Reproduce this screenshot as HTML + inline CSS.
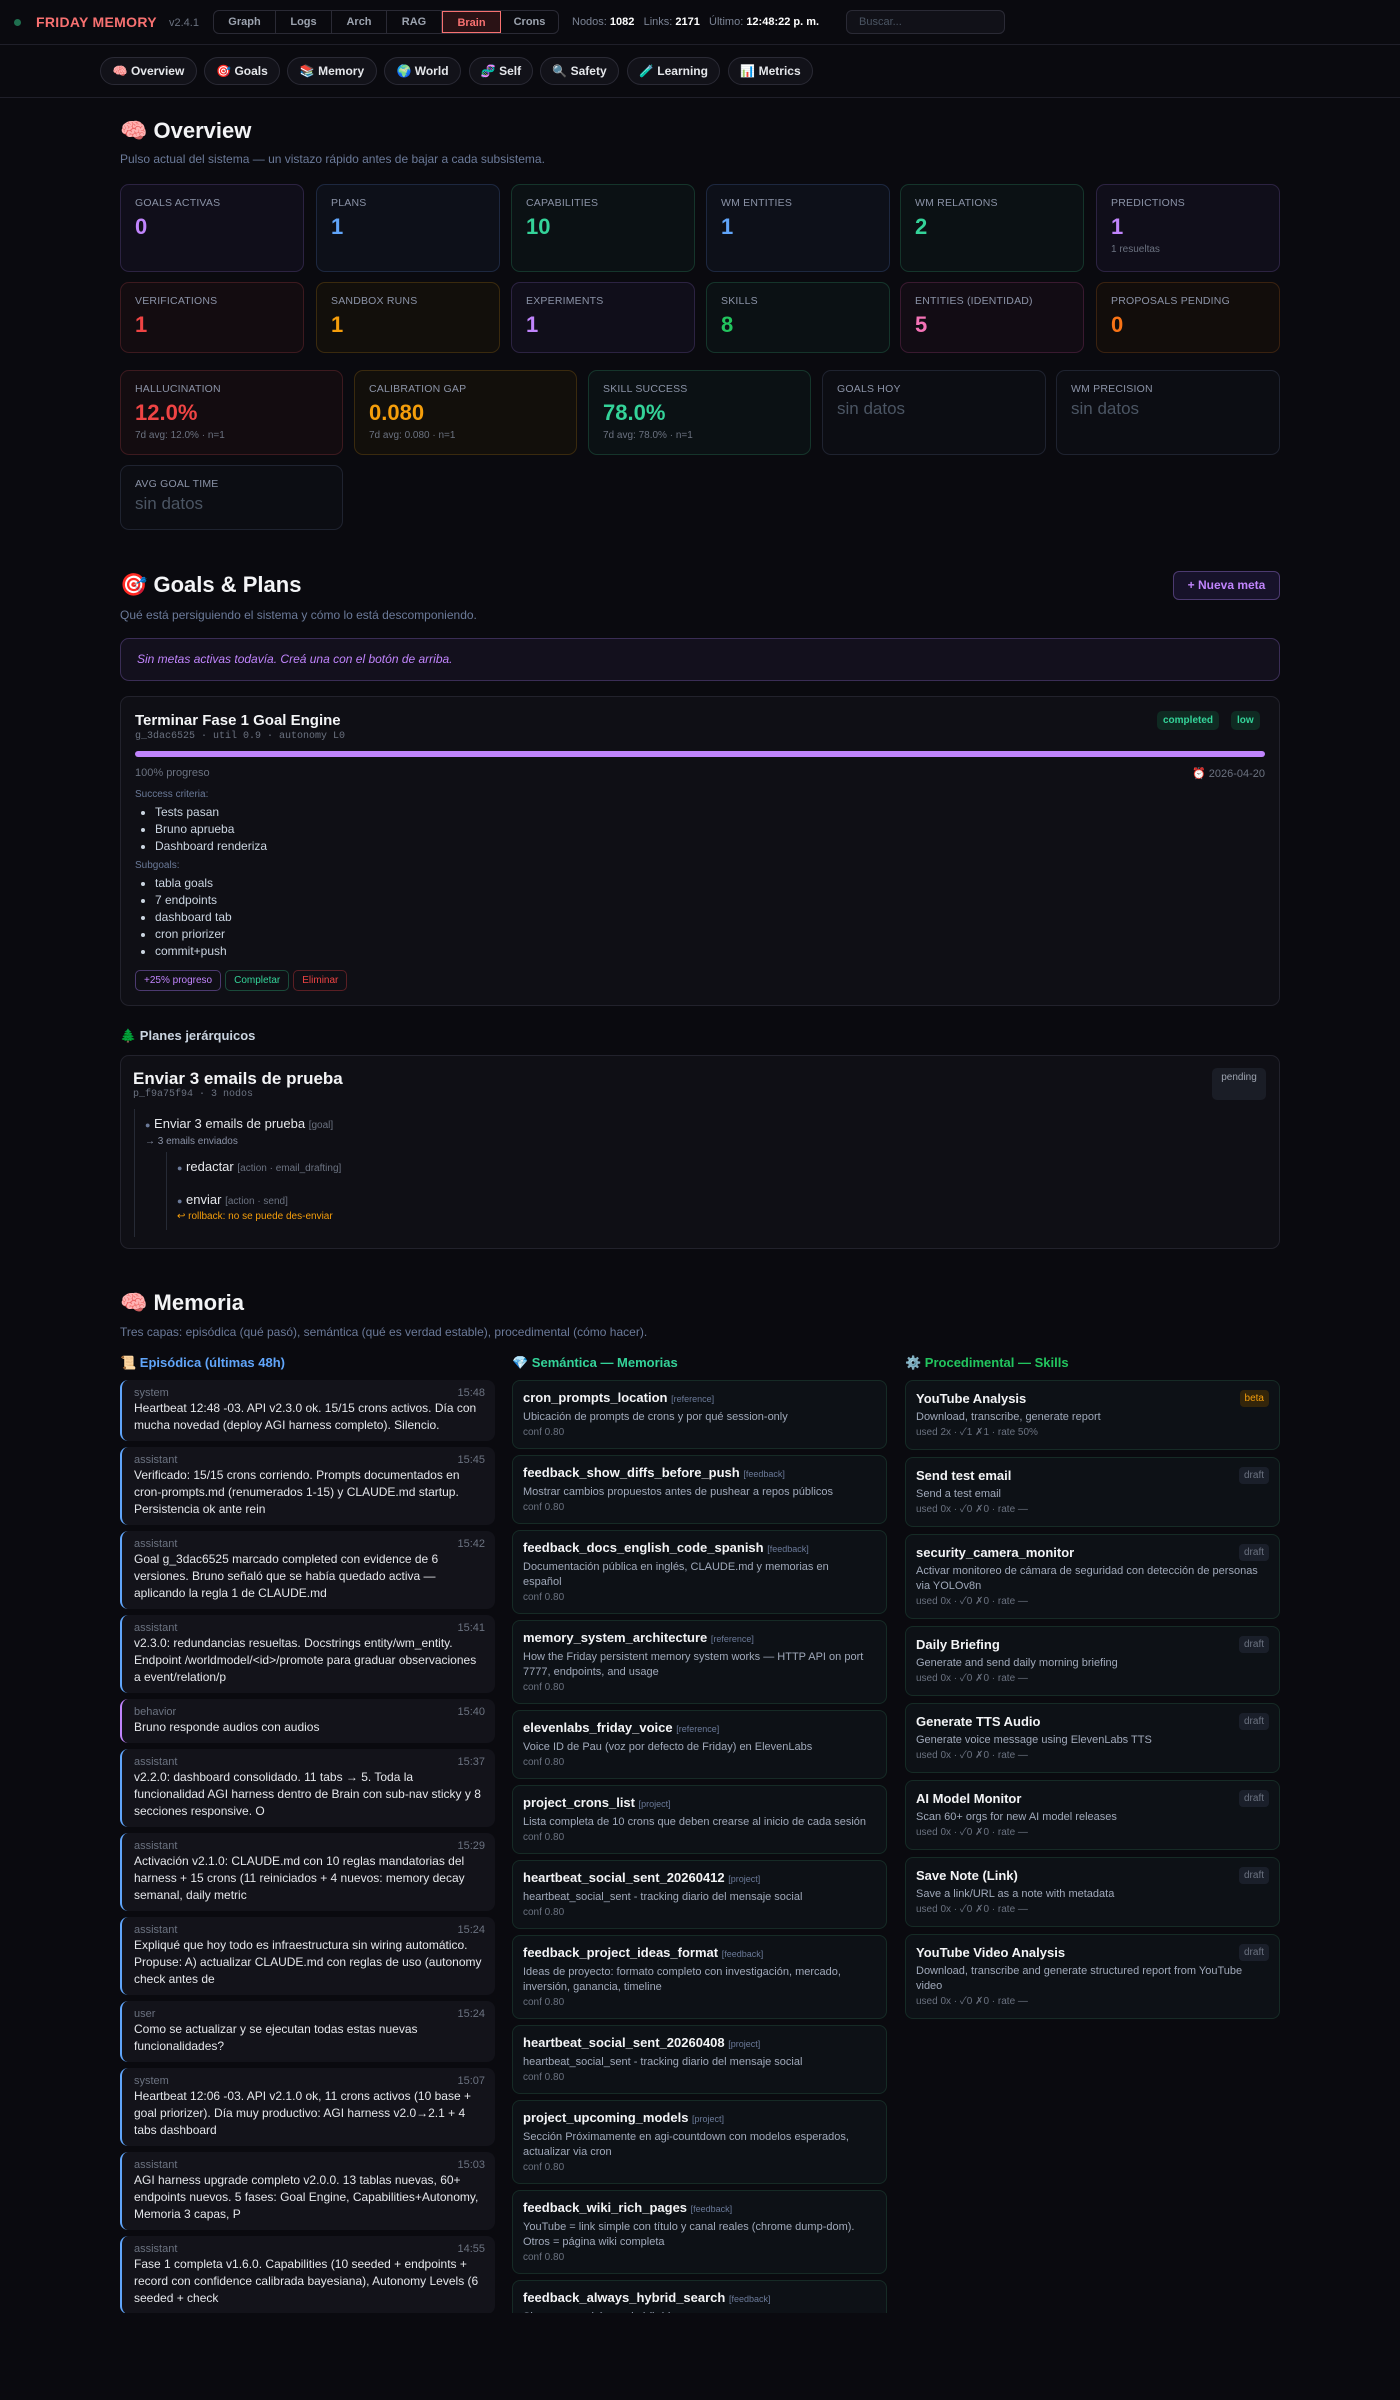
<!DOCTYPE html>
<html><head><meta charset="utf-8"><style>
*{box-sizing:border-box;margin:0;padding:0}
body{width:1400px;height:2400px;background:#0a0a0f;font-family:"Liberation Sans","Noto Sans CJK SC",sans-serif;color:#e5e7eb;position:relative;overflow:hidden}
.abs{position:absolute}
.top{left:0;top:0;width:1400px;height:45px;border-bottom:1px solid #1f1f29}
.brand{left:36px;top:14px;font-size:14px;font-weight:bold;color:#f87171;letter-spacing:.3px}
.dot{left:14px;top:19px;width:7px;height:7px;border-radius:50%;background:#1f6f4f}
.ver{left:169px;top:17px;font-size:11px;color:#6b7280}
.tabs{left:213px;top:10px;height:24px;width:346px;display:flex;border:1px solid #2a2a35;border-radius:6px;overflow:hidden}
.tabs div{font-size:11px;font-weight:bold;color:#9ca3af;line-height:22px;border-right:1px solid #2a2a35;text-align:center;flex:none}
.tabs div:last-child{border-right:none}
.tabs .on{color:#f87171;background:#2a1215;border:1px solid #f87171}
.stats{left:572px;top:16px;font-size:11px;color:#7b8394}
.stats b{color:#fff}
.search{left:846px;top:10px;width:159px;height:24px;border:1px solid #2a2a35;border-radius:6px;background:#111118;font-size:11px;color:#4b5563;padding:5px 12px}
.sub{left:0;top:45px;width:1400px;height:53px;border-bottom:1px solid #1f1f29}
.pill{position:absolute;top:12px;height:28px;border:1px solid #2a2a35;border-radius:14px;background:#121219;font-size:12px;font-weight:bold;color:#e5e7eb;line-height:26px;text-align:center}
h2{position:absolute;left:120px;font-size:22px;font-weight:bold;color:#f3f4f6}
.sd{position:absolute;left:120px;font-size:12px;color:#6b7a99}
.card{position:absolute;border:1px solid;border-radius:9px;padding:12px 14px}
.lab{font-size:10.5px;color:#8b93a7;letter-spacing:.2px;text-transform:uppercase}
.val{font-size:22px;font-weight:bold;margin-top:5px}
.sm{font-size:10px;color:#6b7280;margin-top:4px}
.nd{font-size:17px;color:#4b5563;margin-top:4px}
.pu{border-color:#2c2342;background:#100e1a}.pu .val{color:#c084fc}
.bl{border-color:#1d2840;background:#0d1019}.bl .val{color:#60a5fa}
.gr{border-color:#15352b;background:#0b1114}.gr .val{color:#34d399}
.rd{border-color:#3d1a1f;background:#130c10}.rd .val{color:#ef4444}
.am{border-color:#3a2a0e;background:#120f0b}.am .val{color:#f59e0b}
.gn{border-color:#15352b;background:#0b1114}.gn .val{color:#22c55e}
.pk{border-color:#3a1a30;background:#120c14}.pk .val{color:#f472b6}
.or{border-color:#3a2210;background:#120d0b}.or .val{color:#f97316}
.ne{border-color:#1f2330;background:#0c0d13}
.box{position:absolute;border:1px solid #22222c;border-radius:9px;background:#0f0f15}
.bdg{position:absolute;font-size:10px;font-weight:bold;padding:4px 6px;border-radius:5px}
ul{list-style:disc;padding-left:20px}
li{font-size:12px;line-height:17px;color:#cbd5e1}
.btn{display:inline-block;font-size:10px;padding:4px 8px;border-radius:5px;border:1px solid;margin-right:4px}
.col{position:absolute;top:1380px;width:375px;height:933px;overflow:hidden}
.ep{background:#13131a;border-left:2px solid #60a5fa;border-radius:8px;padding:6px 10px 7px 12px;margin-bottom:6px}
.ep .r{font-size:11px;color:#6b7280;display:flex;justify-content:space-between;line-height:14px}
.ep .t{font-size:12px;line-height:17px;color:#e5e7eb}
.se{background:#0d1116;border:1px solid #162b26;border-radius:8px;padding:8px 10px 7px 10px;margin-bottom:6px;position:relative}
.se .h{font-size:13px;font-weight:bold;color:#f3f4f6;line-height:18px;margin-bottom:2px}
.se .h i{font-style:normal;font-size:9px;color:#6b7a99;font-weight:normal}
.se .d{font-size:11px;line-height:15px;color:#a0a9ba;padding-right:8px}
.se .c{font-size:10px;line-height:16px;color:#6b7280}
.se .bd{position:absolute;right:10px;top:9px;font-size:10px;padding:3px 5px;border-radius:4px;background:#1a1f2a;color:#6b7280}
.sk .se{margin-bottom:7px;padding:9px 10px 8px 10px}
</style></head><body>
<div class="abs top"></div>
<div class="abs dot"></div>
<div class="abs brand">FRIDAY MEMORY</div>
<div class="abs ver">v2.4.1</div>
<div class="abs tabs"><div style="width:62px">Graph</div><div style="width:56px">Logs</div><div style="width:55px">Arch</div><div style="width:55px">RAG</div><div class="on" style="width:59px">Brain</div><div style="width:57px">Crons</div></div>
<div class="abs stats">Nodos: <b>1082</b> &nbsp; Links: <b>2171</b> &nbsp; Último: <b>12:48:22 p. m.</b></div>
<div class="abs search">Buscar...</div>
<div class="abs sub"></div>
<div class="pill" style="left:100px;top:57px;width:97px">🧠 Overview</div>
<div class="pill" style="left:204px;top:57px;width:76px">🎯 Goals</div>
<div class="pill" style="left:287px;top:57px;width:90px">📚 Memory</div>
<div class="pill" style="left:384px;top:57px;width:77px">🌍 World</div>
<div class="pill" style="left:469px;top:57px;width:64px">🧬 Self</div>
<div class="pill" style="left:540px;top:57px;width:79px">🔍 Safety</div>
<div class="pill" style="left:627px;top:57px;width:93px">🧪 Learning</div>
<div class="pill" style="left:728px;top:57px;width:85px">📊 Metrics</div>

<h2 style="top:118px">🧠 Overview</h2>
<div class="sd" style="top:152px">Pulso actual del sistema — un vistazo rápido antes de bajar a cada subsistema.</div>

<div class="card pu" style="left:120px;top:184px;width:184px;height:88px"><div class="lab">Goals activas</div><div class="val">0</div></div>
<div class="card bl" style="left:316px;top:184px;width:184px;height:88px"><div class="lab">Plans</div><div class="val">1</div></div>
<div class="card gr" style="left:511px;top:184px;width:184px;height:88px"><div class="lab">Capabilities</div><div class="val">10</div></div>
<div class="card bl" style="left:706px;top:184px;width:184px;height:88px"><div class="lab">WM Entities</div><div class="val">1</div></div>
<div class="card gr" style="left:900px;top:184px;width:184px;height:88px"><div class="lab">WM Relations</div><div class="val">2</div></div>
<div class="card pu" style="left:1096px;top:184px;width:184px;height:88px"><div class="lab">Predictions</div><div class="val">1</div><div class="sm">1 resueltas</div></div>

<div class="card rd" style="left:120px;top:282px;width:184px;height:71px"><div class="lab">Verifications</div><div class="val">1</div></div>
<div class="card am" style="left:316px;top:282px;width:184px;height:71px"><div class="lab">Sandbox runs</div><div class="val">1</div></div>
<div class="card pu" style="left:511px;top:282px;width:184px;height:71px"><div class="lab">Experiments</div><div class="val">1</div></div>
<div class="card gn" style="left:706px;top:282px;width:184px;height:71px"><div class="lab">Skills</div><div class="val">8</div></div>
<div class="card pk" style="left:900px;top:282px;width:184px;height:71px"><div class="lab">Entities (identidad)</div><div class="val">5</div></div>
<div class="card or" style="left:1096px;top:282px;width:184px;height:71px"><div class="lab">Proposals pending</div><div class="val">0</div></div>

<div class="card rd" style="left:120px;top:370px;width:223px;height:85px"><div class="lab">Hallucination</div><div class="val" style="color:#ef4444">12.0%</div><div class="sm">7d avg: 12.0% · n=1</div></div>
<div class="card am" style="left:354px;top:370px;width:223px;height:85px"><div class="lab">Calibration gap</div><div class="val">0.080</div><div class="sm">7d avg: 0.080 · n=1</div></div>
<div class="card gr" style="left:588px;top:370px;width:223px;height:85px"><div class="lab">Skill success</div><div class="val">78.0%</div><div class="sm">7d avg: 78.0% · n=1</div></div>
<div class="card ne" style="left:822px;top:370px;width:224px;height:85px"><div class="lab">Goals hoy</div><div class="nd">sin datos</div></div>
<div class="card ne" style="left:1056px;top:370px;width:224px;height:85px"><div class="lab">WM precision</div><div class="nd">sin datos</div></div>
<div class="card ne" style="left:120px;top:465px;width:223px;height:65px"><div class="lab">Avg goal time</div><div class="nd">sin datos</div></div>

<h2 style="top:572px">🎯 Goals &amp; Plans</h2>
<div class="abs" style="left:1173px;top:571px;width:107px;height:29px;border:1px solid #4c3a70;border-radius:6px;background:#17122a;color:#c084fc;font-size:12px;font-weight:bold;text-align:center;line-height:27px">+ Nueva meta</div>
<div class="sd" style="top:608px">Qué está persiguiendo el sistema y cómo lo está descomponiendo.</div>
<div class="abs" style="left:120px;top:638px;width:1160px;height:43px;border:1px solid #3a2d55;border-radius:9px;background:#13101d;color:#c084fc;font-style:italic;font-size:12px;padding:13px 16px">Sin metas activas todavía. Creá una con el botón de arriba.</div>

<div class="box" style="left:120px;top:696px;width:1160px;height:310px"></div>
<div class="abs" style="left:135px;top:712px;font-size:15px;font-weight:bold;color:#f3f4f6">Terminar Fase 1 Goal Engine</div>
<div class="abs" style="left:135px;top:731px;font-size:10px;color:#6b7280;font-family:'Liberation Mono',monospace">g_3dac6525 · util 0.9 · autonomy L0</div>
<div class="bdg" style="left:1157px;top:711px;background:#0f2a22;color:#34d399">completed</div>
<div class="bdg" style="left:1231px;top:711px;background:#0f2a22;color:#34d399">low</div>
<div class="abs" style="left:135px;top:751px;width:1130px;height:6px;border-radius:3px;background:#c084fc"></div>
<div class="abs" style="left:135px;top:767px;font-size:11px;color:#6b7280">100% progreso</div>
<div class="abs" style="left:1192px;top:767px;font-size:11px;color:#6b7280">⏰ 2026-04-20</div>
<div class="abs" style="left:135px;top:789px;font-size:10px;color:#6b7a99">Success criteria:</div>
<ul class="abs" style="left:135px;top:804px"><li>Tests pasan</li><li>Bruno aprueba</li><li>Dashboard renderiza</li></ul>
<div class="abs" style="left:135px;top:860px;font-size:10px;color:#6b7a99">Subgoals:</div>
<ul class="abs" style="left:135px;top:875px"><li>tabla goals</li><li>7 endpoints</li><li>dashboard tab</li><li>cron priorizer</li><li>commit+push</li></ul>
<div class="abs" style="left:135px;top:970px"><span class="btn" style="border-color:#4c3a70;color:#c084fc">+25% progreso</span><span class="btn" style="border-color:#1a4a3a;color:#34d399">Completar</span><span class="btn" style="border-color:#5a1f24;color:#ef4444">Eliminar</span></div>

<div class="abs" style="left:120px;top:1028px;font-size:13px;font-weight:bold;color:#cbd5e1">🌲 Planes jerárquicos</div>
<div class="box" style="left:120px;top:1055px;width:1160px;height:194px"></div>
<div class="abs" style="left:133px;top:1069px;font-size:17px;font-weight:bold;color:#f3f4f6">Enviar 3 emails de prueba</div>
<div class="abs" style="left:133px;top:1089px;font-size:10px;color:#6b7280;font-family:'Liberation Mono',monospace">p_f9a75f94 · 3 nodos</div>
<div class="bdg" style="left:1212px;top:1068px;width:54px;height:32px;background:#1a1d26;color:#9ca3af;font-weight:normal;text-align:center">pending</div>
<div class="abs" style="left:134px;top:1109px;width:1px;height:128px;background:#262a35"></div>
<div class="abs" style="left:145px;top:1116px;font-size:13px;color:#e5e7eb"><span style="color:#6b7a99;font-size:9px">●</span> Enviar 3 emails de prueba <span style="font-size:10px;color:#6b7280">[goal]</span></div>
<div class="abs" style="left:145px;top:1136px;font-size:10px;color:#8b93a7">→ 3 emails enviados</div>
<div class="abs" style="left:166px;top:1152px;width:1px;height:78px;background:#262a35"></div>
<div class="abs" style="left:177px;top:1159px;font-size:13px;color:#e5e7eb"><span style="color:#6b7a99;font-size:9px">●</span> redactar <span style="font-size:10px;color:#6b7280">[action · email_drafting]</span></div>
<div class="abs" style="left:177px;top:1192px;font-size:13px;color:#e5e7eb"><span style="color:#6b7a99;font-size:9px">●</span> enviar <span style="font-size:10px;color:#6b7280">[action · send]</span></div>
<div class="abs" style="left:177px;top:1211px;font-size:10px;color:#f59e0b">↩ rollback: no se puede des-enviar</div>

<h2 style="top:1290px">🧠 Memoria</h2>
<div class="sd" style="top:1325px">Tres capas: episódica (qué pasó), semántica (qué es verdad estable), procedimental (cómo hacer).</div>
<div class="abs" style="left:120px;top:1355px;font-size:13px;font-weight:bold;color:#60a5fa">📜 Episódica (últimas 48h)</div>
<div class="abs" style="left:512px;top:1355px;font-size:13px;font-weight:bold;color:#34d399">💎 Semántica — Memorias</div>
<div class="abs" style="left:905px;top:1355px;font-size:13px;font-weight:bold;color:#22c55e">⚙️ Procedimental — Skills</div>

<div class="col" style="left:120px">
<div class="ep"><div class="r"><span>system</span><span>15:48</span></div><div class="t">Heartbeat 12:48 -03. API v2.3.0 ok. 15/15 crons activos. Día con mucha novedad (deploy AGI harness completo). Silencio.</div></div>
<div class="ep"><div class="r"><span>assistant</span><span>15:45</span></div><div class="t">Verificado: 15/15 crons corriendo. Prompts documentados en cron-prompts.md (renumerados 1-15) y CLAUDE.md startup. Persistencia ok ante rein</div></div>
<div class="ep"><div class="r"><span>assistant</span><span>15:42</span></div><div class="t">Goal g_3dac6525 marcado completed con evidence de 6 versiones. Bruno señaló que se había quedado activa — aplicando la regla 1 de CLAUDE.md</div></div>
<div class="ep"><div class="r"><span>assistant</span><span>15:41</span></div><div class="t">v2.3.0: redundancias resueltas. Docstrings entity/wm_entity. Endpoint /worldmodel/&lt;id&gt;/promote para graduar observaciones a event/relation/p</div></div>
<div class="ep" style="border-left-color:#c084fc"><div class="r"><span>behavior</span><span>15:40</span></div><div class="t">Bruno responde audios con audios</div></div>
<div class="ep"><div class="r"><span>assistant</span><span>15:37</span></div><div class="t">v2.2.0: dashboard consolidado. 11 tabs → 5. Toda la funcionalidad AGI harness dentro de Brain con sub-nav sticky y 8 secciones responsive. O</div></div>
<div class="ep"><div class="r"><span>assistant</span><span>15:29</span></div><div class="t">Activación v2.1.0: CLAUDE.md con 10 reglas mandatorias del harness + 15 crons (11 reiniciados + 4 nuevos: memory decay semanal, daily metric</div></div>
<div class="ep"><div class="r"><span>assistant</span><span>15:24</span></div><div class="t">Expliqué que hoy todo es infraestructura sin wiring automático. Propuse: A) actualizar CLAUDE.md con reglas de uso (autonomy check antes de</div></div>
<div class="ep"><div class="r"><span>user</span><span>15:24</span></div><div class="t">Como se actualizar y se ejecutan todas estas nuevas funcionalidades?</div></div>
<div class="ep"><div class="r"><span>system</span><span>15:07</span></div><div class="t">Heartbeat 12:06 -03. API v2.1.0 ok, 11 crons activos (10 base + goal priorizer). Día muy productivo: AGI harness v2.0→2.1 + 4 tabs dashboard</div></div>
<div class="ep"><div class="r"><span>assistant</span><span>15:03</span></div><div class="t">AGI harness upgrade completo v2.0.0. 13 tablas nuevas, 60+ endpoints nuevos. 5 fases: Goal Engine, Capabilities+Autonomy, Memoria 3 capas, P</div></div>
<div class="ep"><div class="r"><span>assistant</span><span>14:55</span></div><div class="t">Fase 1 completa v1.6.0. Capabilities (10 seeded + endpoints + record con confidence calibrada bayesiana), Autonomy Levels (6 seeded + check</div></div>
</div>

<div class="col" style="left:512px">
<div class="se"><div class="h">cron_prompts_location <i>[reference]</i></div><div class="d">Ubicación de prompts de crons y por qué session-only</div><div class="c">conf 0.80</div></div>
<div class="se"><div class="h">feedback_show_diffs_before_push <i>[feedback]</i></div><div class="d">Mostrar cambios propuestos antes de pushear a repos públicos</div><div class="c">conf 0.80</div></div>
<div class="se"><div class="h">feedback_docs_english_code_spanish <i>[feedback]</i></div><div class="d">Documentación pública en inglés, CLAUDE.md y memorias en español</div><div class="c">conf 0.80</div></div>
<div class="se"><div class="h">memory_system_architecture <i>[reference]</i></div><div class="d">How the Friday persistent memory system works — HTTP API on port 7777, endpoints, and usage</div><div class="c">conf 0.80</div></div>
<div class="se"><div class="h">elevenlabs_friday_voice <i>[reference]</i></div><div class="d">Voice ID de Pau (voz por defecto de Friday) en ElevenLabs</div><div class="c">conf 0.80</div></div>
<div class="se"><div class="h">project_crons_list <i>[project]</i></div><div class="d">Lista completa de 10 crons que deben crearse al inicio de cada sesión</div><div class="c">conf 0.80</div></div>
<div class="se"><div class="h">heartbeat_social_sent_20260412 <i>[project]</i></div><div class="d">heartbeat_social_sent - tracking diario del mensaje social</div><div class="c">conf 0.80</div></div>
<div class="se"><div class="h">feedback_project_ideas_format <i>[feedback]</i></div><div class="d">Ideas de proyecto: formato completo con investigación, mercado, inversión, ganancia, timeline</div><div class="c">conf 0.80</div></div>
<div class="se"><div class="h">heartbeat_social_sent_20260408 <i>[project]</i></div><div class="d">heartbeat_social_sent - tracking diario del mensaje social</div><div class="c">conf 0.80</div></div>
<div class="se"><div class="h">project_upcoming_models <i>[project]</i></div><div class="d">Sección Próximamente en agi-countdown con modelos esperados, actualizar via cron</div><div class="c">conf 0.80</div></div>
<div class="se"><div class="h">feedback_wiki_rich_pages <i>[feedback]</i></div><div class="d">YouTube = link simple con título y canal reales (chrome dump-dom). Otros = página wiki completa</div><div class="c">conf 0.80</div></div>
<div class="se"><div class="h">feedback_always_hybrid_search <i>[feedback]</i></div><div class="d">Siempre usar búsqueda híbrida</div><div class="c">conf 0.80</div></div>
</div>

<div class="col sk" style="left:905px">
<div class="se"><div class="h">YouTube Analysis</div><span class="bd" style="background:#33250a;color:#f59e0b">beta</span><div class="d">Download, transcribe, generate report</div><div class="c">used 2x · ✓1 ✗1 · rate 50%</div></div>
<div class="se"><div class="h">Send test email</div><span class="bd">draft</span><div class="d">Send a test email</div><div class="c">used 0x · ✓0 ✗0 · rate —</div></div>
<div class="se"><div class="h">security_camera_monitor</div><span class="bd">draft</span><div class="d">Activar monitoreo de cámara de seguridad con detección de personas via YOLOv8n</div><div class="c">used 0x · ✓0 ✗0 · rate —</div></div>
<div class="se"><div class="h">Daily Briefing</div><span class="bd">draft</span><div class="d">Generate and send daily morning briefing</div><div class="c">used 0x · ✓0 ✗0 · rate —</div></div>
<div class="se"><div class="h">Generate TTS Audio</div><span class="bd">draft</span><div class="d">Generate voice message using ElevenLabs TTS</div><div class="c">used 0x · ✓0 ✗0 · rate —</div></div>
<div class="se"><div class="h">AI Model Monitor</div><span class="bd">draft</span><div class="d">Scan 60+ orgs for new AI model releases</div><div class="c">used 0x · ✓0 ✗0 · rate —</div></div>
<div class="se"><div class="h">Save Note (Link)</div><span class="bd">draft</span><div class="d">Save a link/URL as a note with metadata</div><div class="c">used 0x · ✓0 ✗0 · rate —</div></div>
<div class="se"><div class="h">YouTube Video Analysis</div><span class="bd">draft</span><div class="d">Download, transcribe and generate structured report from YouTube video</div><div class="c">used 0x · ✓0 ✗0 · rate —</div></div>
</div>
</body></html>
